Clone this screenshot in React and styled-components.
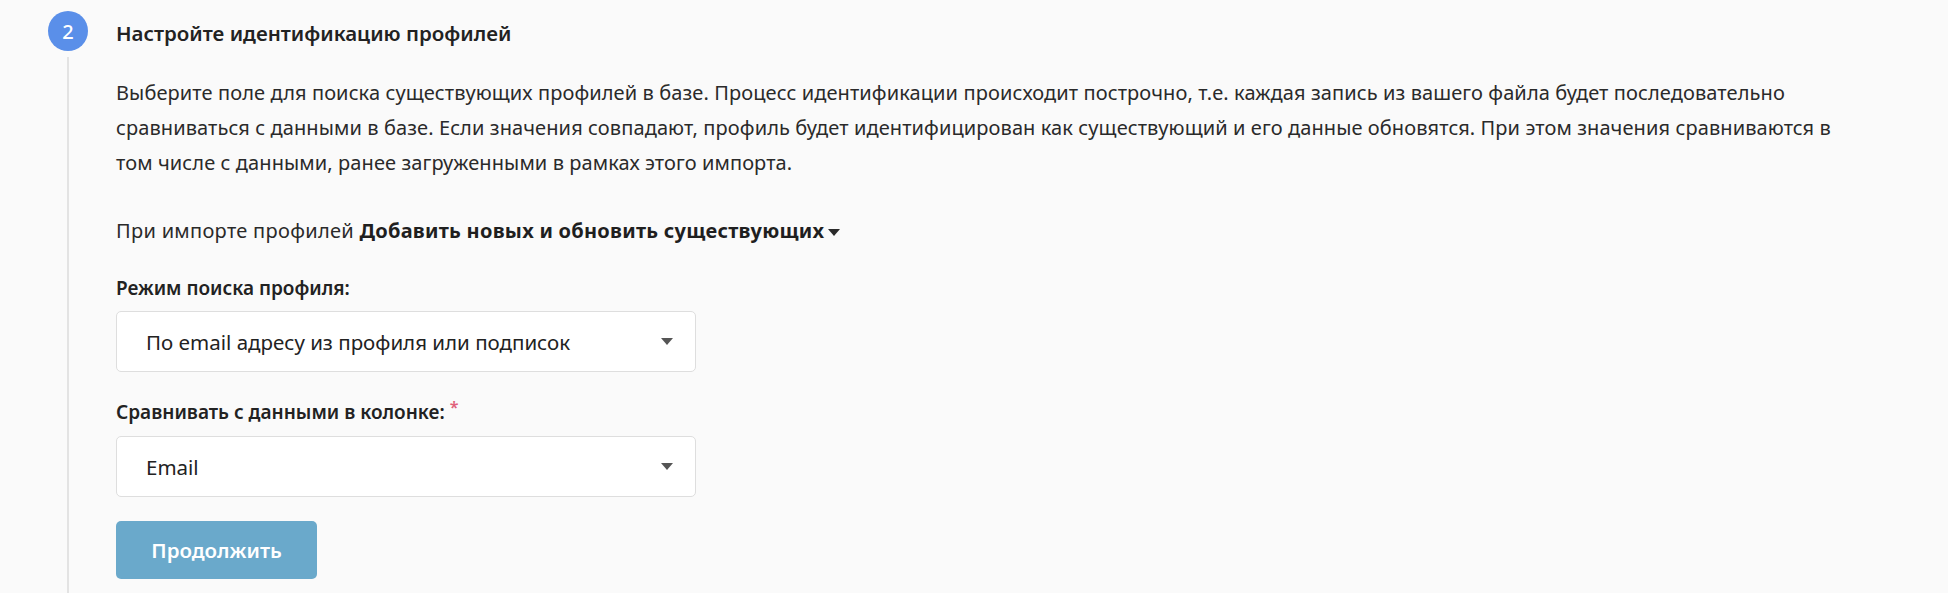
import React from 'react';
import styled, { createGlobalStyle } from 'styled-components';

const GlobalStyle = createGlobalStyle`
  html, body {
    margin: 0;
    padding: 0;
    background: #fafafa;
    font-family: "Noto Sans", "Open Sans", sans-serif;
    color: #222;
  }
`;

const Page = styled.div`
  width: 100%;
  height: 593px;
  overflow: hidden;
  background: #fafafa;
  padding-top: 11px;
  box-sizing: border-box;
`;

const Step = styled.div`
  display: flex;
  align-items: stretch;
  padding-left: 48px;
  min-height: 620px;
`;

const Rail = styled.div`
  display: flex;
  flex-direction: column;
  align-items: center;
  width: 40px;
  flex-shrink: 0;
`;

const StepNumber = styled.div`
  width: 40px;
  height: 40px;
  border-radius: 50%;
  background: #5a8fe9;
  color: #fff;
  display: flex;
  align-items: center;
  justify-content: center;
  font-size: 20px;
  font-weight: 500;
`;

const RailLine = styled.div`
  flex: 1;
  width: 2px;
  margin-top: 6px;
  background: #e3e3e3;
`;

const Content = styled.div`
  flex: 1;
  padding-left: 28px;
  display: flex;
  flex-direction: column;
  align-items: flex-start;
`;

const Title = styled.h2`
  margin: 0;
  height: 40px;
  line-height: 44px;
  font-size: 20.5px;
  font-weight: 600;
  color: #222;
`;

const Description = styled.p`
  margin: 24px 0 0;
  max-width: 1735px;
  font-size: 20px;
  line-height: 35px;
  color: #2a2a2a;
  letter-spacing: 0.1px;
`;

const ModeLine = styled.div`
  margin-top: 33px;
  font-size: 20px;
  line-height: 35px;
  color: #2a2a2a;
  letter-spacing: 0.3px;
`;

const ModeValue = styled.span`
  font-weight: 700;
  color: #1f1f1f;
  letter-spacing: 0.25px;
`;

const Caret = styled.span`
  display: inline-block;
  width: 0;
  height: 0;
  border-left: ${p => p.size}px solid transparent;
  border-right: ${p => p.size}px solid transparent;
  border-top: ${p => Math.round(p.size * 1.1)}px solid ${p => p.color};
  margin-left: ${p => p.gap || 0}px;
  vertical-align: middle;
`;

const Label = styled.div`
  margin-top: ${p => p.top}px;
  font-size: 19px;
  line-height: 30px;
  font-weight: 600;
  color: #222;
`;

const Required = styled.sup`
  color: #e0607a;
  font-size: 16px;
  margin-left: 5px;
  vertical-align: 6px;
  line-height: 0;
`;

const Select = styled.div`
  margin-top: ${p => p.top}px;
  width: 580px;
  height: 61px;
  box-sizing: border-box;
  background: #fff;
  border: 1px solid #dedede;
  border-radius: 5px;
  display: flex;
  align-items: center;
  justify-content: space-between;
  padding: 0 22px 0 29px;
  font-size: 20.5px;
  color: #222;
`;

const Button = styled.button`
  margin-top: 24px;
  width: 201px;
  height: 58px;
  border: none;
  border-radius: 5px;
  background: #6aa9cb;
  color: #fff;
  font-family: inherit;
  font-size: 20.5px;
  font-weight: 600;
  cursor: default;
`;

export default function App() {
  return (
    <>
      <GlobalStyle />
      <Page>
        <Step>
          <Rail>
            <StepNumber>2</StepNumber>
            <RailLine />
          </Rail>
          <Content>
            <Title>Настройте идентификацию профилей</Title>
            <Description>
              Выберите поле для поиска существующих профилей в базе. Процесс идентификации происходит построчно, т.е. каждая запись из вашего файла будет последовательно сравниваться с данными в базе. Если значения совпадают, профиль будет идентифицирован как существующий и его данные обновятся. При этом значения сравниваются в том числе с данными, ранее загруженными в рамках этого импорта.
            </Description>
            <ModeLine>
              При импорте профилей <ModeValue>Добавить новых и обновить существующих</ModeValue>
              <Caret size={6} color="#2a2a2a" gap={4} />
            </ModeLine>
            <Label top={25}>Режим поиска профиля:</Label>
            <Select top={8}>
              По email адресу из профиля или подписок
              <Caret size={6} color="#555" />
            </Select>
            <Label top={25}>
              Сравнивать с данными в колонке:<Required>*</Required>
            </Label>
            <Select top={9}>
              Email
              <Caret size={6} color="#555" />
            </Select>
            <Button>Продолжить</Button>
          </Content>
        </Step>
      </Page>
    </>
  );
}
